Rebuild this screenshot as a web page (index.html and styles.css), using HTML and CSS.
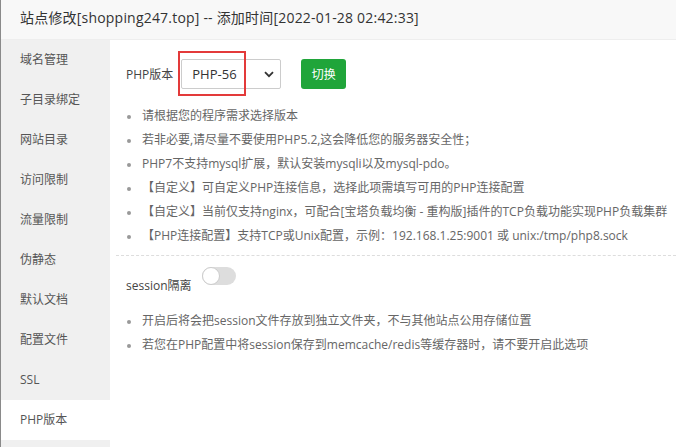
FILE: index.html
```html
<!DOCTYPE html>
<html>
<head>
<meta charset="utf-8">
<link rel="stylesheet" href="styles.css">
</head>
<body>
<div class="win">
  <div class="header">站点修改[shopping247.top] -- 添加时间[2022-01-28 02:42:33]</div>
  <div class="main">
    <div class="side">
      <div class="item">域名管理</div>
      <div class="item">子目录绑定</div>
      <div class="item">网站目录</div>
      <div class="item">访问限制</div>
      <div class="item">流量限制</div>
      <div class="item">伪静态</div>
      <div class="item">默认文档</div>
      <div class="item">配置文件</div>
      <div class="item">SSL</div>
      <div class="item active">PHP版本</div>
    </div>
    <div class="content">
      <div class="row">
        <span class="label">PHP版本</span>
        <div class="select">
          <span>PHP-56</span>
          <svg class="chev" width="10" height="7" viewBox="0 0 10 7"><path d="M1 1.2 L5 5.2 L9 1.2" fill="none" stroke="#333" stroke-width="1.8"/></svg>
          <div class="mark"></div>
        </div>
        <button class="btn">切换</button>
      </div>
      <ul class="tips">
        <li>请根据您的程序需求选择版本</li>
        <li>若非必要,请尽量不要使用PHP5.2,这会降低您的服务器安全性；</li>
        <li>PHP7不支持mysql扩展，默认安装mysqli以及mysql-pdo。</li>
        <li>【自定义】可自定义PHP连接信息，选择此项需填写可用的PHP连接配置</li>
        <li>【自定义】当前仅支持nginx，可配合[宝塔负载均衡 - 重构版]插件的TCP负载功能实现PHP负载集群</li>
        <li>【PHP连接配置】支持TCP或Unix配置，示例：192.168.1.25:9001 或 unix:/tmp/php8.sock</li>
      </ul>
      <div class="sep"></div>
      <div class="row2">
        <span class="label">session隔离</span>
        <span class="toggle"><span class="knob"></span></span>
      </div>
      <ul class="tips tips2">
        <li>开启后将会把session文件存放到独立文件夹，不与其他站点公用存储位置</li>
        <li>若您在PHP配置中将session保存到memcache/redis等缓存器时，请不要开启此选项</li>
      </ul>
    </div>
  </div>
</div>
</body>
</html>
```

FILE: styles.css
```css
html, body {
  margin: 0;
  padding: 0;
  background: #fff;
}
body {
  font-family: "Open Sans", "Noto Sans CJK SC", sans-serif;
  color: #333;
  width: 676px;
  height: 447px;
  overflow: hidden;
}
.win {
  height: 447px;
  border-left: 1px solid #8a8a8a;
  display: flex;
  flex-direction: column;
}
.header {
  height: 39px;
  line-height: 36px;
  background: #f8f8f8;
  border-bottom: 1px solid #eee;
  padding-left: 19px;
  font-size: 14px;
  letter-spacing: 0.2px;
  color: #333;
  flex: none;
}
.main {
  display: flex;
  flex: 1;
}
.side {
  width: 109px;
  background: #f0f0f0;
  flex: none;
  display: flex;
  flex-direction: column;
}
.item {
  height: 40px;
  line-height: 40px;
  padding-left: 19px;
  font-size: 12px;
  color: #555;
}
.item.active {
  background: #fff;
}
.content {
  flex: 1;
  padding: 18px 0 0 16px;
}
.row {
  display: flex;
  align-items: center;
  height: 31px;
}
.label {
  font-size: 12px;
  color: #444;
}
.select {
  position: relative;
  margin-left: 8px;
  width: 100px;
  height: 30px;
  border: 1px solid #ccc;
  border-radius: 2px;
  display: flex;
  align-items: center;
  justify-content: space-between;
  padding: 0 6px 0 10px;
  box-sizing: border-box;
  font-size: 13px;
  color: #333;
}
.chev {
  margin-top: 1px;
}
.mark {
  position: absolute;
  left: -4px;
  top: -9px;
  width: 64px;
  height: 41px;
  border: 2px solid #e33a3a;
}
.btn {
  margin-left: 20px;
  width: 45px;
  height: 30px;
  border: none;
  border-radius: 3px;
  background: #20a53a;
  color: #fff;
  font-family: "Noto Sans CJK SC", sans-serif;
  font-size: 12px;
  padding: 0;
}
.tips {
  list-style: none;
  margin: 15px 0 0 0;
  padding: 0;
}
.tips li {
  position: relative;
  height: 24px;
  line-height: 24px;
  padding-left: 16px;
  font-size: 12px;
  color: #666;
  white-space: nowrap;
}
.tips li::before {
  content: "";
  position: absolute;
  left: 1px;
  top: 11px;
  width: 4px;
  height: 4px;
  border-radius: 50%;
  background: #999;
}
.sep {
  margin: 7px 0 0 -10px;
  border-top: 1px dashed #ddd;
}
.row2 {
  display: flex;
  align-items: center;
  margin-top: 10px;
  height: 30px;
}
.row2 .label {
  margin-top: 7px;
}
.toggle {
  position: relative;
  margin-left: 10px;
  margin-top: -11px;
  width: 34px;
  height: 18px;
  border-radius: 10px;
  background: #ddd;
}
.knob {
  position: absolute;
  left: 0;
  top: 0;
  width: 16px;
  height: 16px;
  border-radius: 50%;
  background: #fff;
  border: 1px solid #ccc;
}
.tips2 {
  margin-top: 13px;
}
```
